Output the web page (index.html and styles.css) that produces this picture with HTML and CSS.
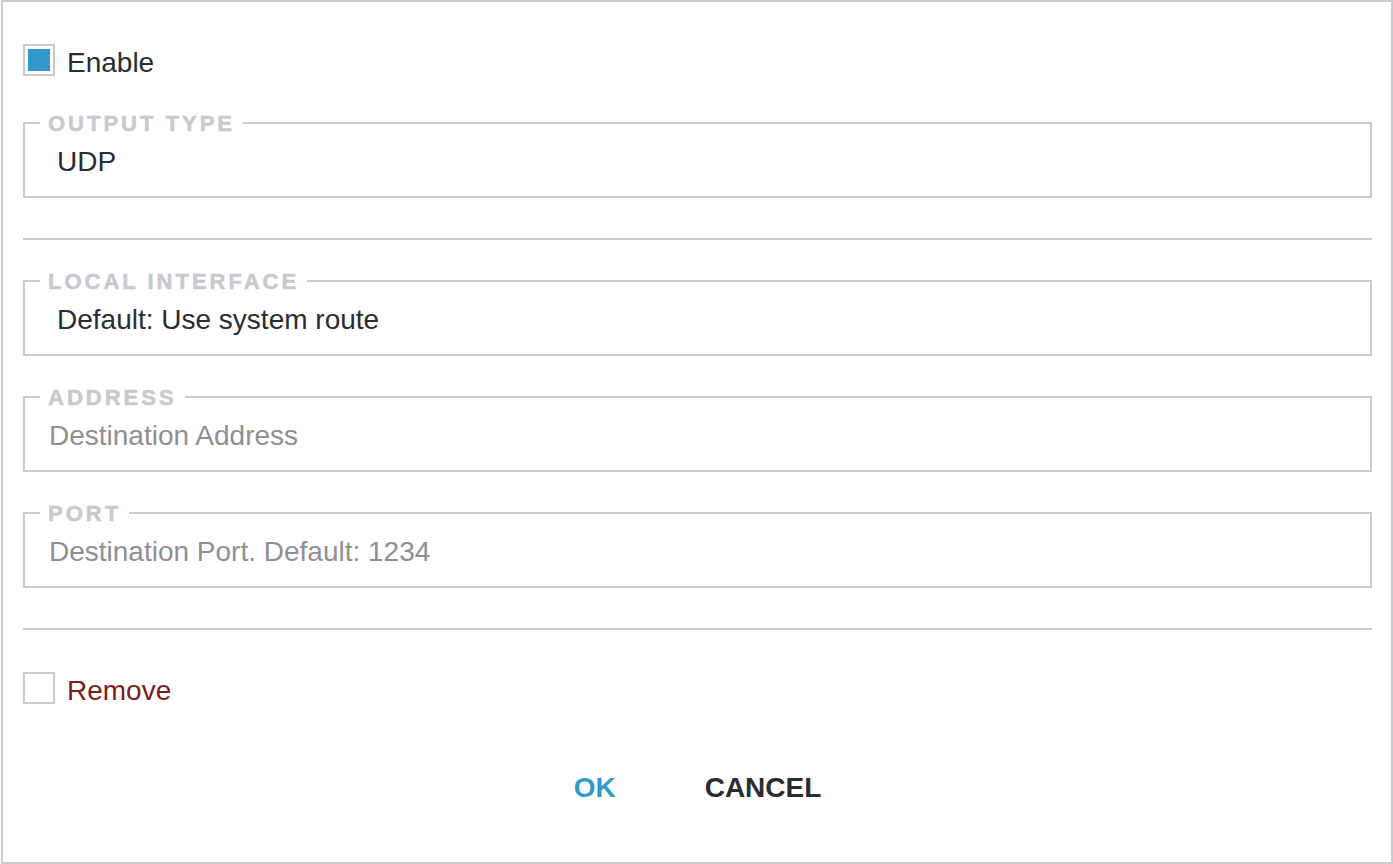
FILE: index.html
```html
<!DOCTYPE html>
<html lang="en">
<head>
<meta charset="utf-8">
<title>Output settings</title>
<link rel="stylesheet" href="styles.css">
</head>
<body>
<div class="dialog">
  <label class="check">
    <span class="box"><span class="fill"></span></span>
    <span class="check-label">Enable</span>
  </label>

  <fieldset class="field field-first">
    <legend>OUTPUT TYPE</legend>
    <div class="value select">UDP</div>
  </fieldset>

  <hr class="divider">

  <fieldset class="field field-after-rule">
    <legend>LOCAL INTERFACE</legend>
    <div class="value select">Default: Use system route</div>
  </fieldset>

  <fieldset class="field">
    <legend>ADDRESS</legend>
    <input class="value input" type="text" placeholder="Destination Address">
  </fieldset>

  <fieldset class="field">
    <legend>PORT</legend>
    <input class="value input" type="text" placeholder="Destination Port. Default: 1234">
  </fieldset>

  <hr class="divider">

  <label class="check check-remove">
    <span class="box"></span>
    <span class="check-label remove-label">Remove</span>
  </label>

  <div class="actions">
    <button class="btn btn-ok" type="button">OK</button>
    <button class="btn btn-cancel" type="button">CANCEL</button>
  </div>
</div>
</body>
</html>
```

FILE: styles.css
```css
html, body {
  margin: 0;
  padding: 0;
  background: #ffffff;
}

body {
  font-family: "Liberation Sans", Arial, Helvetica, sans-serif;
  color: #2a2c32;
}

.dialog {
  margin-left: 1px;
  width: 1392px;
  height: 864px;
  box-sizing: border-box;
  border: 2px solid #c8cbd0;
  padding: 42px 19px 0 20px;
  display: flex;
  flex-direction: column;
}

.check {
  display: flex;
  align-items: flex-start;
  gap: 12px;
  height: 32px;
}

.box {
  width: 32px;
  height: 32px;
  box-sizing: border-box;
  border: 2px solid #c8cbd0;
  padding: 3px;
  flex: none;
}

.fill {
  display: block;
  width: 22px;
  height: 22px;
  background: #3399cc;
}

.check-label {
  font-size: 28px;
  line-height: 32px;
  margin-top: 3px;
  color: #2a2c32;
}

.remove-label {
  color: #7e1c1c;
}

.field {
  margin: 30px 0 0;
  padding: 0;
  border: 2px solid #c8cbd0;
  min-width: 0;
}

.field-first {
  margin-top: 36px;
}

.field legend {
  margin-left: 15px;
  padding: 0 8px;
  font-size: 22px;
  line-height: 22px;
  font-weight: bold;
  letter-spacing: 3px;
  color: #c6c9cf;
  -webkit-text-stroke: 0.5px #c6c9cf;
  transform: translateY(1px);
}

.value {
  display: block;
  width: 100%;
  box-sizing: border-box;
  height: 62px;
  margin: 0;
  border: 0;
  background: transparent;
  font-family: inherit;
  font-size: 28px;
  line-height: 32px;
  color: #2a2c32;
}

.select {
  padding: 12px 0 18px 32px;
}

.input {
  padding: 12px 0 18px 24px;
  outline: none;
}

.input::placeholder {
  color: #8e8f94;
  opacity: 1;
}

.divider {
  border: 0;
  height: 2px;
  background: #c8cbd0;
  margin: 40px 0 0;
  flex: none;
}

.field-after-rule {
  margin-top: 30px;
}

.check-remove {
  margin-top: 42px;
}

.actions {
  margin-top: 68px;
  display: flex;
  justify-content: center;
  gap: 89px;
}

.btn {
  border: 0;
  background: none;
  padding: 0;
  font-family: inherit;
  font-size: 28px;
  line-height: 32px;
  font-weight: bold;
  cursor: pointer;
}

.btn-ok {
  color: #3399cc;
}

.btn-cancel {
  color: #2a2c32;
}
```
